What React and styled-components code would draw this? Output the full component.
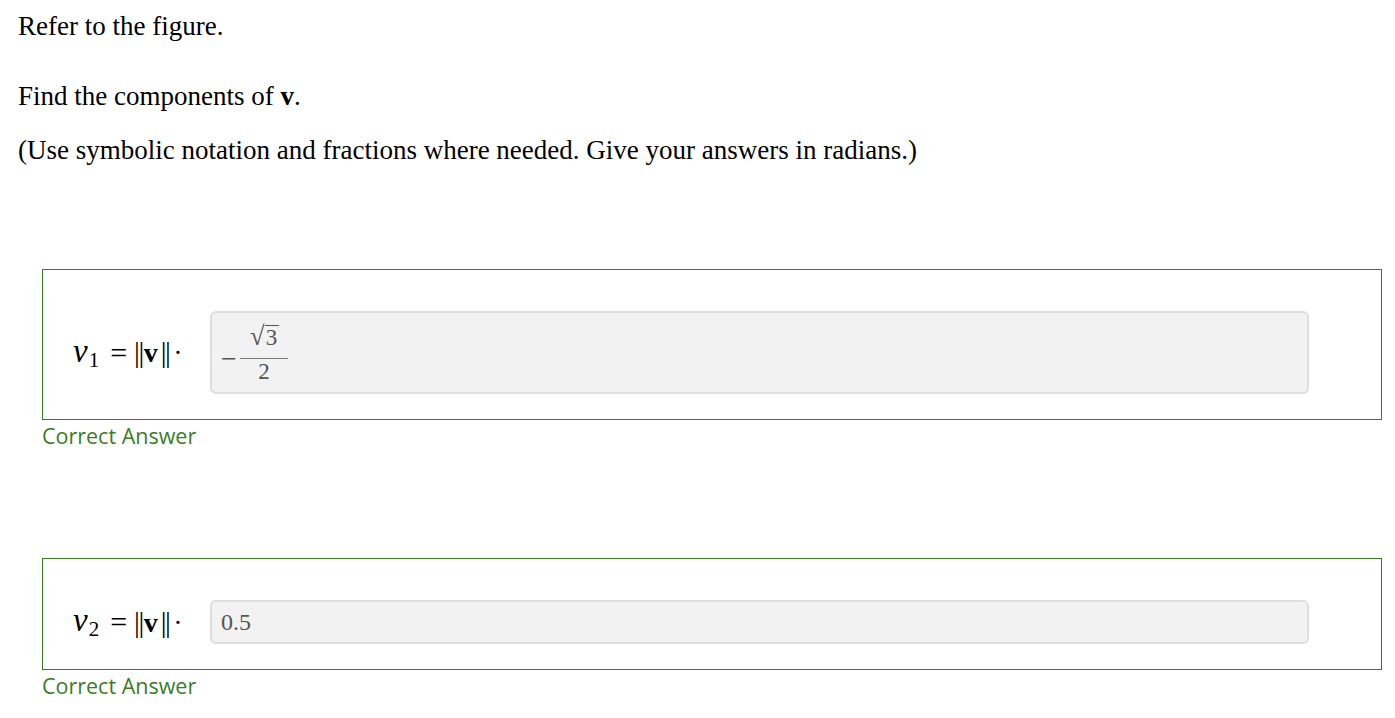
import React from 'react'
import styled, { createGlobalStyle } from 'styled-components'

const GlobalStyle = createGlobalStyle`
    body {
        margin : 0;
        background : #fff;
        font-family : "Liberation Serif", "Times New Roman", serif;
        color : #000;
    }
`

const Page = styled.div`
    padding : 7px 13px 0 18px;
`

const Para = styled.p`
    font-size : 27px;
    line-height : 38px;
    margin : 0 0 ${props => props.gap || 0}px 0;
`

const Part = styled.div`
    margin-left : 24px;
    margin-top : ${props => props.top}px;
`

const Box = styled.div`
    border : 1px solid #3b7d23;
    height : ${props => props.height}px;
    box-sizing : border-box;
    display : flex;
    align-items : flex-start;
    padding : 41px 72px 0 30px;
`

const Label = styled.div`
    width : 137px;
    flex : none;
    height : ${props => props.height}px;
    font-size : 28px;
    white-space : nowrap;
    display : flex;
    align-items : center;
`

const Var = styled.span`
    font-style : italic;
    font-size : 33px;
    sub {
        font-style : normal;
        font-size : 21px;
        vertical-align : -5px;
        margin-left : 1px;
    }
`

const Eq = styled.span`
    margin : 0 7px 0 11px;
    font-size : 30px;
`

const Bars = styled.span`
    font-size : 29px;
    letter-spacing : -1.5px;
    font-weight : normal;
    margin-right : 1px;
`

const Bold = styled.b`
    font-size : 28px;
    margin-right : 3px;
`

const Dot = styled.span`
    margin-left : 3px;
`

const Field = styled.div`
    flex : 1;
    height : ${props => props.height}px;
    box-sizing : border-box;
    background : #f2f2f2;
    border : 2px solid #dedede;
    border-radius : 6px;
    display : flex;
    align-items : center;
    padding-left : 9px;
    color : #555;
    font-size : 24px;
`

const Minus = styled.span`
    margin-right : 3px;
    font-size : 28px;
    margin-top : 12px;
`

const Frac = styled.span`
    display : inline-flex;
    flex-direction : column;
    align-items : center;
    margin-top : 0;
`

const Num = styled.span`
    padding : 0 9px 7px 10px;
    border-bottom : 1px solid #777;
    line-height : 28px;
`

const Root = styled.span`
    display : inline-flex;
    align-items : flex-end;
    font-size : 27px;
`

const Radicand = styled.span`
    border-top : 1px solid #555;
    padding : 0 2px 0 1px;
    line-height : 24px;
    font-size : 23px;
`

const Den = styled.span`
    padding-top : 2px;
    font-size : 23px;
    line-height : 22px;
`

const Feedback = styled.div`
    font-family : "Open Sans", "Noto Sans", sans-serif;
    color : #3b7d23;
    font-size : 21.5px;
    line-height : 32px;
`

function Norm() {
  return (
    <span>
        <Bars>||</Bars><Bold>v</Bold><Bars>||</Bars><Dot>·</Dot>
    </span>
  )
}

function Answer({ sub, boxHeight, fieldHeight, top, children }) {
  return (
    <Part top={top}>
        <Box height={boxHeight}>
            <Label height={fieldHeight}>
                <Var>v<sub>{sub}</sub></Var>
                <Eq>=</Eq>
                <Norm />
            </Label>
            <Field height={fieldHeight}>{children}</Field>
        </Box>
        <Feedback>Correct Answer</Feedback>
    </Part>
  )
}

export default function App() {
  return (
    <Page>
        <GlobalStyle />
        <Para gap={32}>Refer to the figure.</Para>
        <Para gap={16}>Find the components of <b>v</b>.</Para>
        <Para>(Use symbolic notation and fractions where needed. Give your answers in radians.)</Para>
        <Answer sub="1" boxHeight={151} fieldHeight={83} top={100}>
            <Minus>−</Minus>
            <Frac>
                <Num><Root>√<Radicand>3</Radicand></Root></Num>
                <Den>2</Den>
            </Frac>
        </Answer>
        <Answer sub="2" boxHeight={112} fieldHeight={44} top={106}>
            0.5
        </Answer>
    </Page>
  )
}
